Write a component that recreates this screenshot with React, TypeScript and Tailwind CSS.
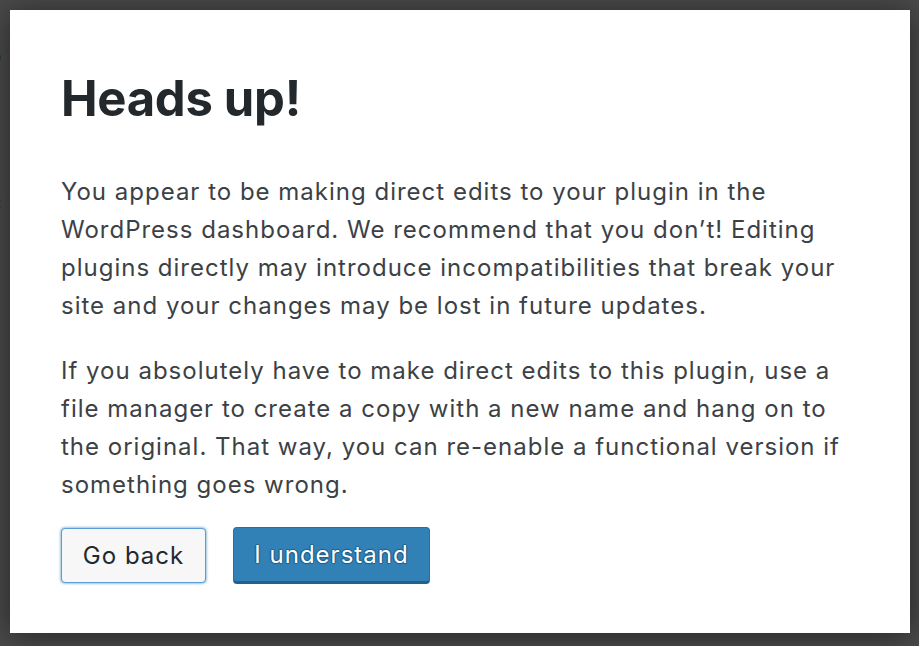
export default function App() {
  return (
    <div className="relative h-[646px] w-[919px] overflow-hidden bg-[#4a4a4a] pb-[13px] pl-[10px] pr-[9px] pt-[10px] font-['Inter','Liberation_Sans',sans-serif]">
      {/* page content peeking behind the overlay */}
      <span className="absolute left-[-14px] top-[36px] text-[26px] text-[#111]">o</span>
      <span className="absolute left-[-12px] top-[184px] text-[24px] text-[#2a0f3a]">c</span>
      <div className="relative h-full w-full bg-white px-[51px] pt-[54px] shadow-[0_3px_30px_rgba(0,0,0,0.5)]">
        <h1 className="text-[49px] font-bold leading-[70px] tracking-[-0.3px] text-[#23282d]">Heads up!</h1>
        <div className="mt-[39px] space-y-[27px] text-[24px] leading-[38px] tracking-[1px] text-[#3c4146]">
          <p>
            You appear to be making direct edits to your plugin in the WordPress dashboard. We recommend that you
            don’t! Editing plugins directly may introduce incompatibilities that break your site and your changes may be
            lost in future updates.
          </p>
          <p>
            If you absolutely have to make direct edits to this plugin, use a file manager to create a copy with a new
            name and hang on to the original. That way, you can re-enable a functional version if something goes wrong.
          </p>
        </div>
        <div className="mt-[23px] flex items-center gap-[27px]">
          <button
            type="button"
            className="h-[55px] w-[145px] rounded-[4px] border border-[#5b9dd9] bg-[#f7f7f7] text-[24px] tracking-[1px] text-[#23282d] shadow-[0_0_3px_rgba(0,115,170,0.8)]"
          >
            Go back
          </button>
          <button
            type="button"
            className="h-[57px] w-[197px] rounded-[4px] border border-[#2a6f9e] border-b-[3px] border-b-[#24608a] bg-[#3281b6] text-[24px] tracking-[1px] text-white [text-shadow:0_-1px_1px_#1f5c85,1px_0_1px_#1f5c85,0_1px_1px_#1f5c85,-1px_0_1px_#1f5c85]"
          >
            I understand
          </button>
        </div>
      </div>
    </div>
  );
}
